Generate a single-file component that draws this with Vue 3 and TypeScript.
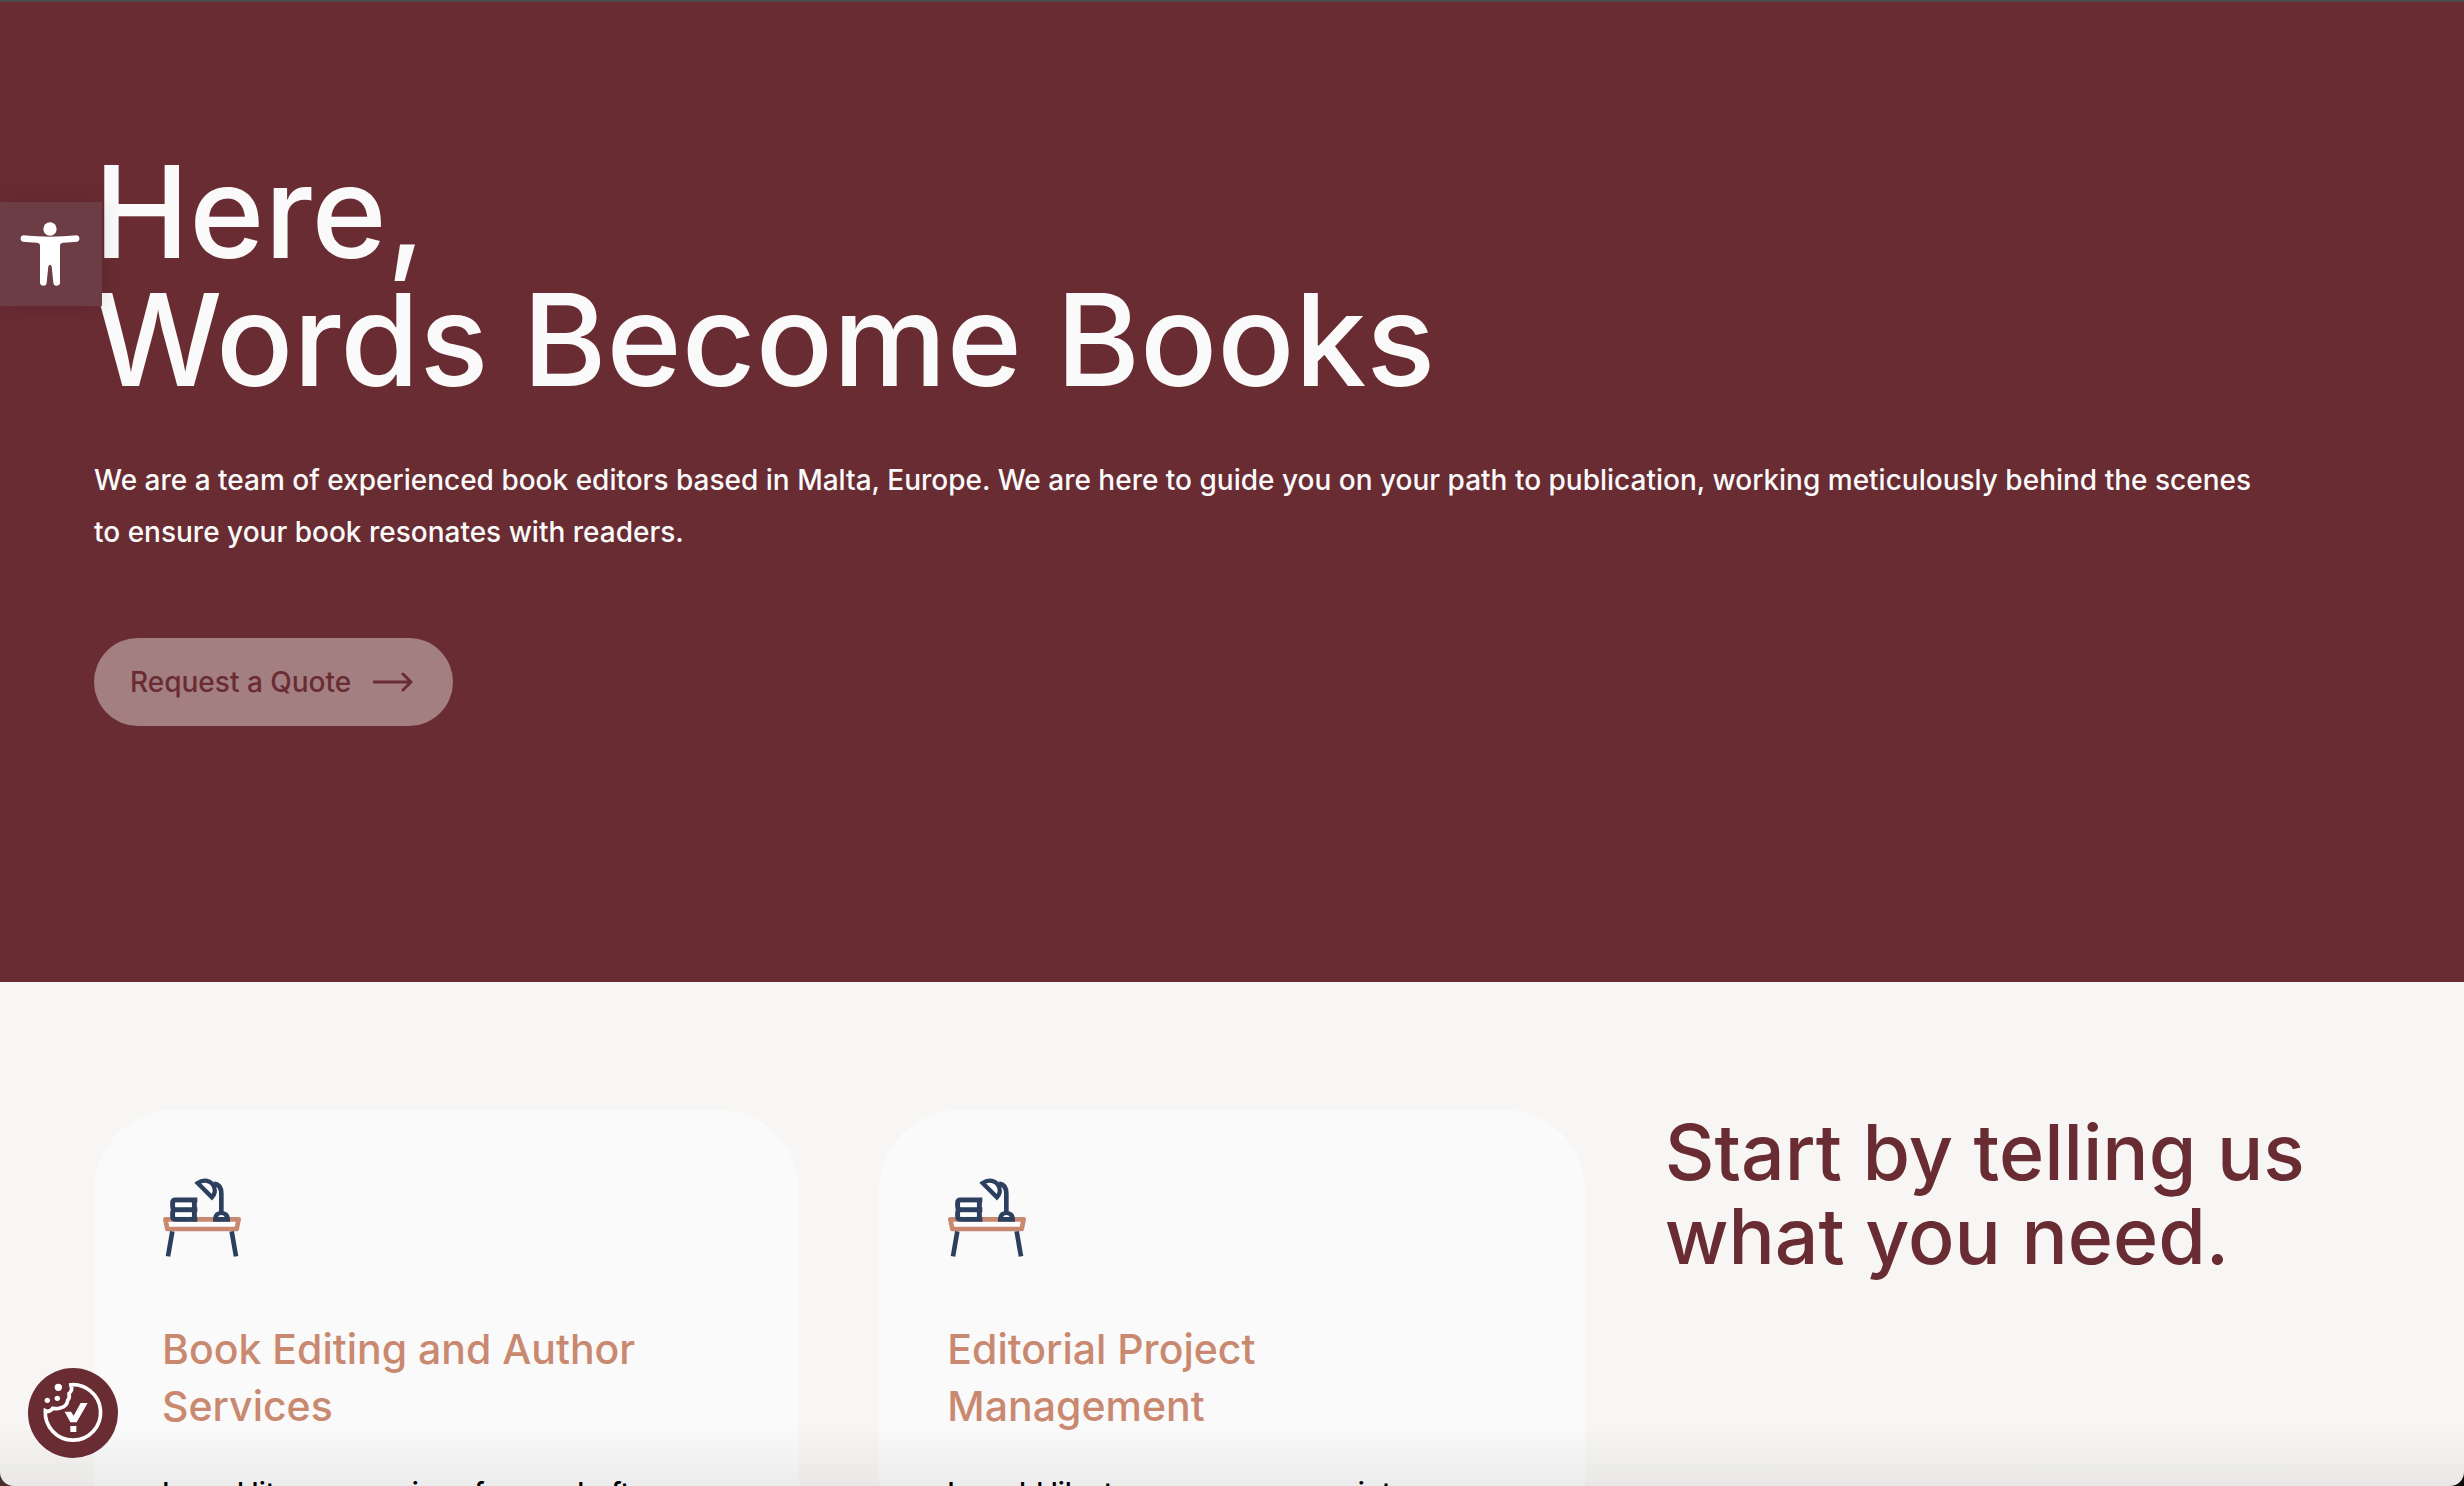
<script setup lang="ts">
interface Service {
  id: string
  title: string
  text: string
}

const services: Service[] = [
  {
    id: 'editing',
    title: 'Book Editing and Author Services',
    text: 'I need literary services for my draft.',
  },
  {
    id: 'project',
    title: 'Editorial Project Management',
    text: 'I would like to see my manuscript',
  },
]
</script>

<template>
  <div class="page">
    <header class="hero">
      <h1>Here,<br />Words Become Books</h1>
      <p>
        We are a team of experienced book editors based in Malta, Europe. We are here to guide you on
        your path to publication, working meticulously behind the scenes to ensure your book
        resonates with readers.
      </p>
      <a class="quote" href="#quote">
        Request a Quote
        <svg width="40" height="20" viewBox="0 0 40 20" fill="none" aria-hidden="true">
          <path d="M1 10H38M30 2L38 10L30 18" stroke="currentColor" stroke-width="3" stroke-linecap="round" stroke-linejoin="round" />
        </svg>
      </a>
    </header>

    <main class="services">
      <article v-for="service in services" :key="service.id" class="card">
        <svg class="desk" viewBox="66 83 240 240" fill="none" aria-hidden="true">
          <path d="M76 207H296L290 236H82Z" fill="#fff" stroke="#c98970" stroke-width="14" stroke-linejoin="round" />
          <path d="M97 243L84 318M275 243L288 318" stroke="#2c3f5f" stroke-width="14" />
          <path d="M172 149H106Q98 149 98 158V168Q98 178 107 178H172M172 178H107Q98 178 98 188V198Q98 207 108 207H172M163 143V214" stroke="#2c3f5f" stroke-width="15" />
          <path d="M106 157H155V170H106ZM106 187H155V199H106Z" fill="#fff" />
          <path d="M173 98Q190 86 208 94Q226 104 224 126Q222 135 216 141Z" fill="#fff" stroke="#2c3f5f" stroke-width="13" />
          <path d="M222 100Q244 103 244 130V188" stroke="#2c3f5f" stroke-width="14" />
          <path d="M219 214V204Q222 182 244 182Q267 182 270 204V214Z" fill="#2c3f5f" />
          <path d="M234 200Q236 194 244 194Q252 194 254 200Z" fill="#fff" />
        </svg>
        <h2>{{ service.title }}</h2>
        <p>{{ service.text }}</p>
      </article>
      <h2 class="prompt">Start by telling us what you need.</h2>
    </main>

    <div class="fade"></div>

    <button class="access" type="button" aria-label="Accessibility tools">
      <svg width="60" height="64" viewBox="60 97 180 192" fill="#fff" aria-hidden="true">
        <circle cx="150" cy="118" r="20" />
        <path d="M69 137Q150 145 231 137A10 10 0 0 1 232 156L190 159Q180 160 180 168V277A10 10 0 0 1 160 279L155 230Q150 221 145 230L140 279A10 10 0 0 1 120 277V168Q120 160 110 159L68 156A10 10 0 0 1 69 137Z" />
      </svg>
    </button>

    <button class="cookie" type="button" aria-label="Cookie preferences">
      <svg width="90" height="90" viewBox="84 84 270 270" fill="none" aria-hidden="true">
        <path d="M207 135A83 83 0 1 1 136 212Q148 218 158 205Q172 208 183 203Q201 199 203 181Q210 173 207 161Q220 149 212 135" stroke="#fff" stroke-width="11" />
        <g fill="#fff">
          <circle cx="175" cy="142" r="11" />
          <circle cx="172" cy="175" r="8" />
          <circle cx="142" cy="181" r="8" />
          <path d="M194 215H213L221 227L242 189H263L230 247H211Z" />
          <path d="M211 258H229V276H211Z" />
        </g>
      </svg>
    </button>
  </div>
</template>

<style>
body {
  margin: 0;
  background: linear-gradient(90deg, #4a3026, #0c0c0c);
}
</style>

<style scoped>
.page {
  position: relative;
  box-sizing: border-box;
  height: 100vh;
  overflow: hidden;
  border-radius: 0 0 14px 14px;
  border-top: 2px solid #4a4a4a;
  background: #f7f6f4;
  color: #000;
  font-family: Inter, 'Liberation Sans', sans-serif;
  font-weight: 500;
}

h1,
h2,
p {
  margin: 0;
  font-weight: 500;
}

.hero {
  box-sizing: border-box;
  min-height: 980px;
  padding: 146px 94px 128px;
  background: #692c33;
  color: #fafafa;
}

h1 {
  font-size: 128px;
  line-height: 128px;
}

.hero p {
  margin-top: 50px;
  padding-right: 100px;
  font-size: 28px;
  line-height: 52px;
}

.quote {
  display: inline-flex;
  align-items: center;
  gap: 22px;
  box-sizing: border-box;
  height: 88px;
  margin-top: 80px;
  padding: 0 40px 0 36px;
  border-radius: 44px;
  background: #a37f82;
  color: #692c33;
  font-size: 28px;
  line-height: 40px;
  text-decoration: none;
}

.services {
  display: grid;
  grid-template-columns: repeat(3, minmax(0, 1fr));
  gap: 80px;
  padding: 128px 94px;
}

.card {
  padding: 68px 80px 68px 68px;
  border-radius: 80px;
  background: #fafafa;
}

.desk {
  display: block;
  width: 80px;
  height: 80px;
}

.card h2 {
  margin-top: 63px;
  color: #c98970;
  font-size: 41px;
  line-height: 57px;
}

.card p {
  margin-top: 32px;
  font-size: 28px;
  line-height: 52px;
}

.prompt {
  color: #692c33;
  font-size: 77px;
  line-height: 84px;
}

.fade {
  position: absolute;
  right: 0;
  bottom: 0;
  left: 0;
  height: 60px;
  background: linear-gradient(rgba(0, 0, 0, 0), rgba(0, 0, 0, 0.06));
}

.access {
  position: absolute;
  top: 200px;
  left: 0;
  display: flex;
  align-items: center;
  width: 102px;
  height: 104px;
  padding: 0 20px;
  border: 0;
  background: #6c3d45;
  box-shadow: 0 0 20px rgba(0, 0, 0, 0.12);
}

.cookie {
  position: absolute;
  bottom: 28px;
  left: 28px;
  width: 90px;
  height: 90px;
  padding: 0;
  border: 0;
  border-radius: 50%;
  background: #692c33;
}
</style>
